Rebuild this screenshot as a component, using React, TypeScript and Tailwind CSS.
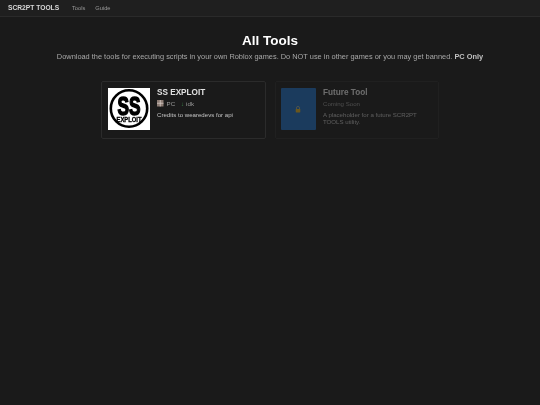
export default function App() {
  return (
    <div className="min-h-[405px] bg-[#1a1a1a] font-['Liberation_Sans',Arial,sans-serif] text-[#e0e0e0]">
      {/* Nav */}
      <nav className="flex h-[17px] items-center gap-[13px] border-b border-[#2a2a2a] bg-[#1f1f1f] pl-[8px] [will-change:transform]">
        <span className="text-[6.7px] font-bold text-[#d8d8d8] [will-change:transform]">SCR2PT TOOLS</span>
        <div className="flex gap-[10px] text-[5.7px] text-[#9a9a9a] [will-change:transform]">
          <span>Tools</span>
          <span>Guide</span>
        </div>
      </nav>

      {/* Heading */}
      <div className="flex flex-col items-center pt-[16px] [will-change:transform]">
        <h1 className="text-[13.5px] leading-[16px] font-bold text-white">All Tools</h1>
        <p className="mt-[3px] text-[7.4px] leading-[10px] text-[#a8a8a8]">
          Download the tools for executing scripts in your own Roblox games. Do NOT use in other games or you may get banned.{' '}
          <strong className="font-bold text-[#c0c0c0]">PC Only</strong>
        </p>
      </div>

      {/* Cards */}
      <div className="mt-[19px] flex justify-center gap-[9px] pr-[1px]">
        <div className="flex h-[58px] w-[165px] gap-[7px] rounded-[2px] border border-[#2b2b2b] p-[6px] [will-change:transform]">
          <div className="size-[42px] shrink-0 bg-white">
            <svg viewBox="0 0 42 42" className="size-full">
              <circle cx="21" cy="20.5" r="18.2" fill="none" stroke="#000" strokeWidth="2.6" />
              <text x="21" y="27" textAnchor="middle" fontFamily="Liberation Sans" fontWeight="700" fontSize="26" stroke="#000" strokeWidth="1.6" fill="#000" textLength="23" lengthAdjust="spacingAndGlyphs">SS</text>
              <text x="21" y="34.3" textAnchor="middle" fontFamily="Liberation Sans" fontWeight="700" fontSize="6.4" fill="#000" stroke="#000" strokeWidth="0.3" textLength="25" lengthAdjust="spacingAndGlyphs">EXPLOIT</text>
            </svg>
          </div>
          <div className="flex flex-col">
            <h3 className="text-[8.2px] leading-[9px] font-bold text-[#e0e0e0]">SS EXPLOIT</h3>
            <div className="mt-[2px] flex h-[9px] items-center text-[6.2px] text-[#999]">
              <svg viewBox="0 0 7 7" className="mr-[3px] size-[6.5px]">
                <rect width="7" height="7" fill="#8a7a72" />
                <path d="M3.5 0v7M0 3.5h7" stroke="#d9cfc9" strokeWidth="0.8" />
              </svg>
              <span>PC</span>
              <span className="mr-[2px] ml-[6px] text-[6px] leading-none text-[#3f8a4a]">↓</span>
              <span>idk</span>
            </div>
            <p className="mt-[3px] text-[6.1px] leading-[8px] text-[#c4c4c4]">Credits to wearedevs for api</p>
          </div>
        </div>

        <div className="flex h-[58px] w-[164px] gap-[7px] rounded-[2px] border border-[#2b2b2b] p-[6px] pl-[5px] opacity-40">
          <div className="flex h-[42px] w-[35px] shrink-0 items-center justify-center rounded-[1px] bg-[#1e6fc4]">
            <svg viewBox="0 0 8 9" className="mt-[1px] w-[6px]">
              <path d="M2 4V2.6a2 2 0 0 1 4 0V4" fill="none" stroke="#d8c98a" strokeWidth="0.9" />
              <rect x="1" y="4" width="6" height="4.6" rx="0.6" fill="#e6b422" />
            </svg>
          </div>
          <div className="flex flex-col [will-change:transform]">
            <h3 className="text-[8.2px] leading-[9px] font-bold text-[#e8e8e8]">Future Tool</h3>
            <p className="mt-[2px] text-[6.1px] leading-[9px] text-[#999]">Coming Soon</p>
            <p className="mt-[3px] text-[6.1px] leading-[7px] text-[#c0c0c0]">
              A placeholder for a future SCR2PT TOOLS utility.
            </p>
          </div>
        </div>
      </div>
    </div>
  );
}
